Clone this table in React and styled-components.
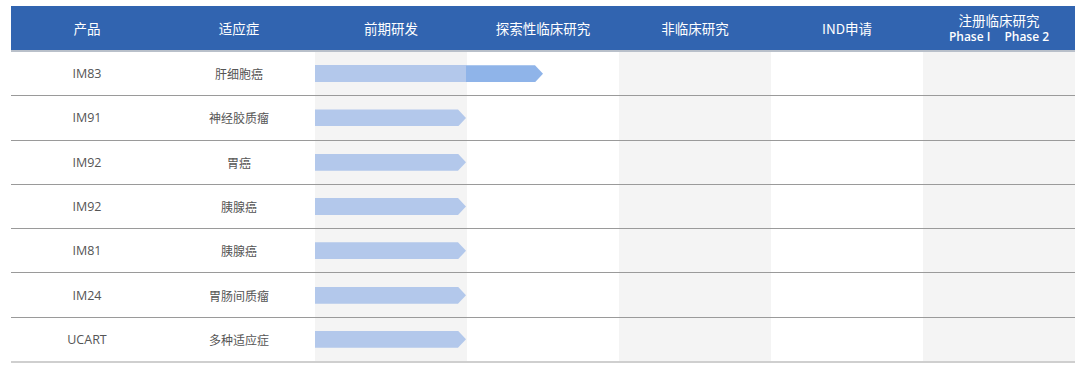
import React from 'react';
import styled, { createGlobalStyle } from 'styled-components';

const GlobalStyle = createGlobalStyle`
  body {
    margin: 0;
    background: #ffffff;
    font-family: "Open Sans", "Noto Sans CJK SC", sans-serif;
  }
`;

const Wrapper = styled.div`
  padding: 6px 0 0 11px;
`;

const Table = styled.div`
  width: 1064px;
`;

const HeaderRow = styled.div`
  display: grid;
  grid-template-columns: repeat(7, 152px);
  height: 44px;
  background-color: #3164b0;
  border-bottom: 2px solid #b9c0ca;
`;

const HeaderCell = styled.div`
  display: flex;
  flex-direction: column;
  align-items: center;
  justify-content: center;
  color: #ffffff;
  font-size: 13.5px;
  line-height: 18px;
  font-family: "Noto Sans CJK SC", sans-serif;
`;

const PhaseLine = styled.div`
  display: flex;
  gap: 14px;
  font-family: "Open Sans", sans-serif;
  font-size: 12px;
  font-weight: 600;
  line-height: 16px;
`;

const Row = styled.div`
  display: grid;
  grid-template-columns: repeat(7, 152px);
  box-sizing: border-box;
  height: ${p => (p.last ? '45px' : '44.3px')};
  border-bottom: ${p => (p.last ? '2px solid #cfcfcf' : '1px solid #9a9a9a')};
`;

const Cell = styled.div`
  grid-row: 1;
  grid-column: ${p => p.col};
  display: flex;
  align-items: center;
  justify-content: center;
  font-size: ${p => (p.cjk ? '12px' : '12.5px')};
  color: #555555;
  font-family: ${p => (p.cjk ? '"Noto Sans CJK SC", sans-serif' : '"Open Sans", sans-serif')};
  background-color: ${p => (p.shade ? '#f4f4f4' : 'transparent')};
`;

const Bar = styled.div`
  grid-row: 1;
  grid-column: 3 / 8;
  align-self: center;
  display: flex;
  height: 17px;
`;

const Segment = styled.div`
  height: 100%;
  background-color: ${p => p.color};
  clip-path: ${p =>
    p.tip ? 'polygon(0 0, calc(100% - 8px) 0, 100% 50%, calc(100% - 8px) 100%, 0 100%)' : 'none'};
`;

const rows = [
  { id: 'IM83', name: '肝细胞癌', segments: [151, 77] },
  { id: 'IM91', name: '神经胶质瘤', segments: [151] },
  { id: 'IM92', name: '胃癌', segments: [151] },
  { id: 'IM92', name: '胰腺癌', segments: [151] },
  { id: 'IM81', name: '胰腺癌', segments: [151] },
  { id: 'IM24', name: '胃肠间质瘤', segments: [151] },
  { id: 'UCART', name: '多种适应症', segments: [151] },
];

const colors = ['#b3c8eb', '#8fb4e9'];

export default function App() {
  return (
    <Wrapper>
      <GlobalStyle />
      <Table>
        <HeaderRow>
          <HeaderCell>产品</HeaderCell>
          <HeaderCell>适应症</HeaderCell>
          <HeaderCell>前期研发</HeaderCell>
          <HeaderCell>探索性临床研究</HeaderCell>
          <HeaderCell>非临床研究</HeaderCell>
          <HeaderCell>IND申请</HeaderCell>
          <HeaderCell>
            注册临床研究
            <PhaseLine>
              <span>Phase I</span>
              <span>Phase 2</span>
            </PhaseLine>
          </HeaderCell>
        </HeaderRow>
        {rows.map((r, i) => (
          <Row key={i} last={i === rows.length - 1}>
            <Cell col={1}>{r.id}</Cell>
            <Cell col={2} cjk>{r.name}</Cell>
            <Cell col={3} shade />
            <Cell col={4} />
            <Cell col={5} shade />
            <Cell col={6} />
            <Cell col={7} shade />
            <Bar>
              {r.segments.map((w, j) => (
                <Segment
                  key={j}
                  color={colors[j]}
                  tip={j === r.segments.length - 1}
                  style={{ width: w }}
                />
              ))}
            </Bar>
          </Row>
        ))}
      </Table>
    </Wrapper>
  );
}
